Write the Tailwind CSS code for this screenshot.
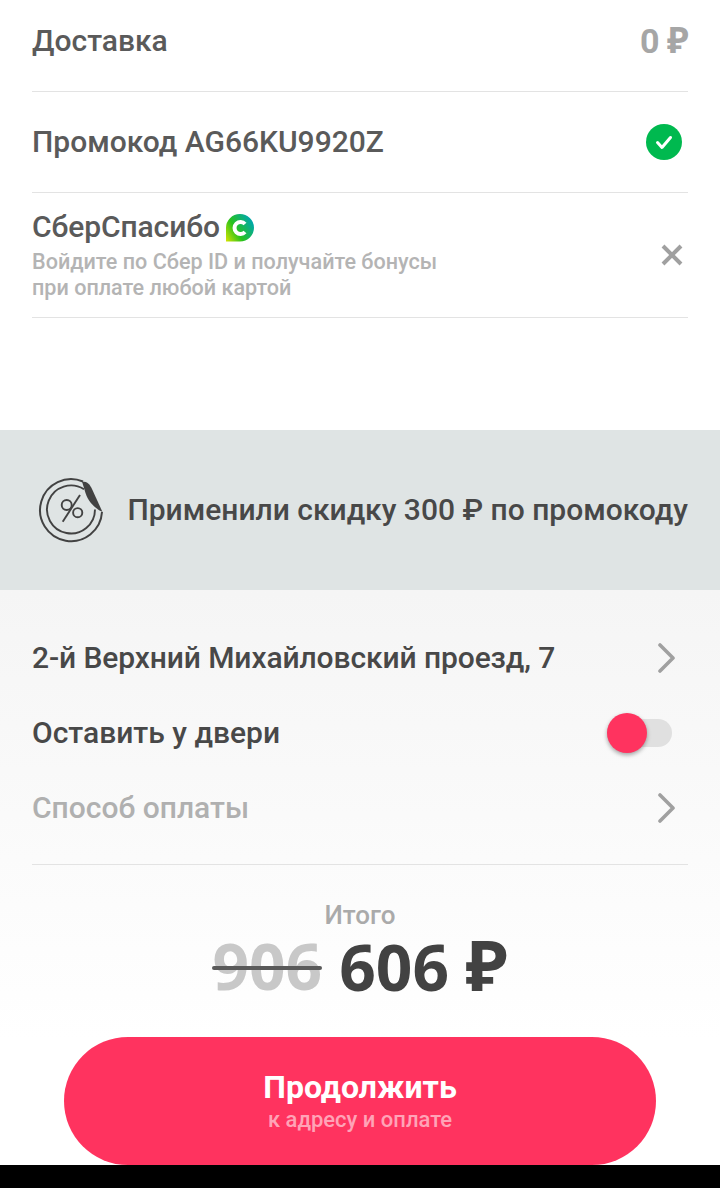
<!doctype html>
<html><head><meta charset="utf-8"><script src="https://cdn.jsdelivr.net/npm/@tailwindcss/browser@4"></script></head>
<body class="m-0 bg-black">
<div class="w-[720px] h-[1188px] flex flex-col overflow-hidden font-['Roboto',sans-serif] font-medium text-[#424242]">
  <div class="h-[430px] shrink-0 bg-white px-8 flex flex-col">
    <div class="h-[92px] shrink-0 border-b border-[#e3e3e3] flex items-center justify-between pb-[11px]">
      <span class="text-[30px] leading-[36px] text-[#5a5a5a] mt-[2px]">Доставка</span>
      <span class="text-[34px] leading-[36px] font-bold text-[#a6a6a6] tracking-[-0.5px]">0 <span class="font-['Noto_Sans',sans-serif] font-bold text-[36px] leading-[36px]">₽</span></span>
    </div>
    <div class="h-[101px] shrink-0 border-b border-[#e3e3e3] flex items-center justify-between">
      <span class="text-[30px] leading-[36px] text-[#5a5a5a]">Промокод AG66KU9920Z</span>
      <svg class="mr-1.5" width="36" height="36" viewBox="0 0 36 36"><circle cx="18" cy="18" r="18" fill="#00b94f"/><path d="M11.5 18.5l4.5 5 8.5-10" fill="none" stroke="#fff" stroke-width="3" stroke-linecap="round" stroke-linejoin="round"/></svg>
    </div>
    <div class="h-[125px] shrink-0 border-b border-[#e3e3e3] flex items-center justify-between">
      <div class="flex flex-col">
        <div class="flex items-center gap-[6px] h-[36px]">
          <span class="text-[30px] leading-[36px] text-[#5a5a5a] tracking-[-0.1px]">СберСпасибо</span>
          <svg class="mt-[2px] ml-[-1px]" width="29" height="28" viewBox="0 0 29 28"><defs><linearGradient id="g" x1="0" y1="1" x2="1" y2="0.4"><stop offset="0" stop-color="#d6e400"/><stop offset="0.45" stop-color="#28c21c"/><stop offset="1" stop-color="#00a8a8"/></linearGradient></defs><path d="M1 27.5V14A14 13.7 0 1 1 15 27.5Z" fill="url(#g)"/><path d="M20 10A6 6 0 1 0 20 18" fill="none" stroke="#fff" stroke-width="4"/></svg>
        </div>
        <span class="text-[21.6px] leading-[26px] text-[#b4b4b4] mt-[4px]">Войдите по Сбер ID и получайте бонусы<br>при оплате любой картой</span>
      </div>
      <svg class="mr-[4px]" width="24" height="24" viewBox="0 0 24 24"><path d="M3 3l18 18M21 3L3 21" stroke="#a0a0a0" stroke-width="4"/></svg>
    </div>
  </div>
  <div class="h-[160px] shrink-0 bg-[#dfe4e4] pl-[38px] pr-8 flex items-center justify-between">
    <svg width="68" height="68" viewBox="0 0 68 68" fill="none" stroke="#424242" stroke-width="2">
      <path d="M45 5.5A31 31 0 1 0 64 36"/>
      <path d="M46 13.3A24 24 0 1 0 57 33.5" stroke-width="1.9"/>
      <path d="M44 5.5C50 5.5 52 9 54 13L64.5 36C56 32 50 25 47.5 17Z" fill="#424242" stroke="none"/>
      <circle cx="28.7" cy="29" r="5" stroke-width="1.9"/><circle cx="39.7" cy="36.7" r="4.6" stroke-width="1.9"/><path d="M42 19L24.7 45.7" stroke-width="1.9"/>
    </svg>
    <span class="text-[30px] leading-[36px] whitespace-nowrap text-[#484848]">Применили скидку 300 ₽ по промокоду</span>
  </div>
  <div class="h-[575px] shrink-0 relative bg-gradient-to-b from-[#f5f5f5] to-white to-[78%] px-8 pt-[30px] flex flex-col">
    <div class="h-[75px] shrink-0 flex items-center justify-between">
      <span class="text-[30px] leading-[36px] tracking-[-0.1px] text-[#484848]">2-й Верхний Михайловский проезд, 7</span>
      <svg class="mr-[12px]" width="18" height="30" viewBox="0 0 18 30" fill="none" stroke="#a0a0a0" stroke-width="3.6" stroke-linecap="round" stroke-linejoin="round"><path d="M2 2l13 13L2 28"/></svg>
    </div>
    <div class="h-[75px] shrink-0 flex items-center justify-between">
      <span class="text-[30px] leading-[36px] text-[#484848]">Оставить у двери</span>
      <div class="relative w-[65px] h-[28px] bg-[#e0e0e0] rounded-full mr-4">
        <div class="absolute left-0 top-[-6px] w-10 h-10 rounded-full bg-[#ff335f] shadow-[0_2px_4px_rgba(0,0,0,0.35)]"></div>
      </div>
    </div>
    <div class="h-[75px] shrink-0 flex items-center justify-between">
      <span class="text-[30px] leading-[36px] text-[#b0b0b0]">Способ оплаты</span>
      <svg class="mr-[12px]" width="18" height="30" viewBox="0 0 18 30" fill="none" stroke="#a0a0a0" stroke-width="3.6" stroke-linecap="round" stroke-linejoin="round"><path d="M2 2l13 13L2 28"/></svg>
    </div>
    <div class="h-[20px] shrink-0 border-b border-[#e3e3e3]"></div>
    <div class="flex flex-col items-center mt-[35px]">
      <span class="text-[26px] leading-[30px] text-[#aaaaaa]">Итого</span>
      <div class="flex items-center gap-[17px] font-['Open_Sans',sans-serif] font-bold text-[64px] leading-[66px] mt-[1px]">
        <span class="text-[#c8c8c8] relative">906<span class="absolute left-0 right-0 top-[33px] h-[4px] rounded-full bg-[#5a5a5a]"></span></span>
        <span class="text-[#424242]">606 <span class="font-['Noto_Sans',sans-serif] font-bold text-[70px] leading-[66px]">₽</span></span>
      </div>
    </div>
    <div class="absolute left-16 right-16 bottom-0 h-32 rounded-full bg-[#ff335f] flex flex-col items-center justify-center">
      <span class="text-[32px] leading-[36px] font-bold text-white">Продолжить</span>
      <span class="text-[22px] leading-[26px] text-[#ffa3b7] mt-[2px]">к адресу и оплате</span>
    </div>
  </div>
</div>
</body></html>
